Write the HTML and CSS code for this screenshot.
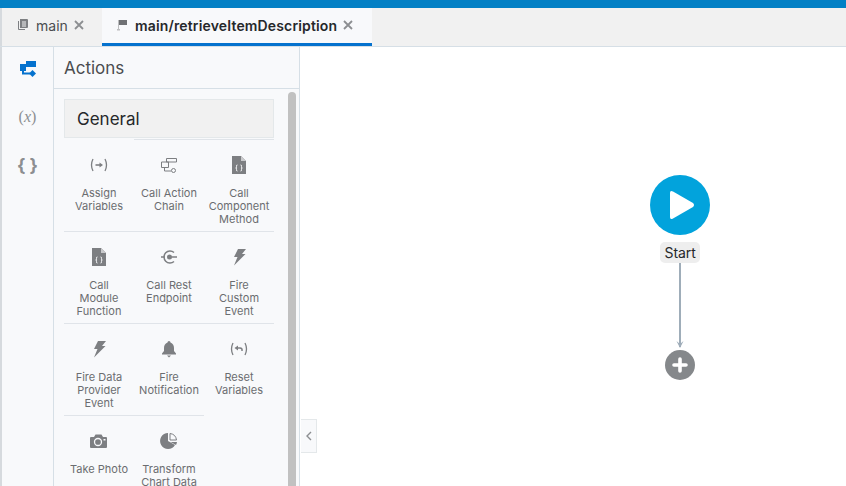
FILE: index.html
```html
<!DOCTYPE html>
<html lang="en">
<head>
    <meta charset="UTF-8">
    <meta name="viewport" content="width=device-width, initial-scale=1.0">
    <title>main/retrieveItemDescription</title>
    <link rel="stylesheet" href="styles.css">
</head>
<body>
    <div class="topbar"></div>
    <div class="tabs">
        <div class="tab">
            <svg class="tab-icon" width="12" height="12" viewBox="0 0 12 12"><path d="M1 2h1v8h6v1H2a1 1 0 0 1-1-1z" fill="#7d7f82"/><path d="M3 0h7a1 1 0 0 1 1 1v7a1 1 0 0 1-1 1H3z" fill="#7d7f82"/><path d="M5 3h4M5 5h4M5 7h4" stroke="#f1f1f1"/></svg>
            <span>main</span>
            <svg class="close" width="10" height="10" viewBox="0 0 10 10"><path d="M1 1l8 8M9 1l-8 8" stroke="#8c8e91" stroke-width="1.800"/></svg>
        </div>
        <div class="tab active">
            <svg class="tab-icon" width="12" height="12" viewBox="0 0 12 12"><path d="M3 1h8v5H3z" fill="#6f7174"/><path d="M2 1h1v9H2zM1 10h3v1.500H1z" fill="#bdbec0"/></svg>
            <span>main/retrieveItemDescription</span>
            <svg class="close" width="10" height="10" viewBox="0 0 10 10"><path d="M1 1l8 8M9 1l-8 8" stroke="#8c8e91" stroke-width="1.800"/></svg>
        </div>
    </div>
    <div class="main">
        <div class="rail">
            <svg class="rail-icon" width="16" height="16" viewBox="0 0 16 16"><path d="M6 0h10v6H6zM0 3h6v7H0z" fill="#0572ce"/><path d="M3 10v2.500h7" stroke="#0572ce" stroke-width="2" fill="none"/><path d="M12.500 9l3.500 3.500-3.500 3.500-3.500-3.500z" fill="#0572ce"/></svg>
            <span class="rail-text var">(<i>x</i>)</span>
            <span class="rail-text braces">{ }</span>
        </div>
        <div class="panel">
            <div class="panel-title">Actions</div>
            <div class="panel-body">
                <div class="group">General</div>
                <div class="tiles">
                    <div class="tile">
                        <svg width="18" height="18" viewBox="0 0 18 18"><path d="M3 3Q0 9 3 15M15 3q3 6 0 12" stroke="#7d7f82" fill="none" stroke-width="1.300"/><path d="M5.500 9h5" stroke="#7d7f82" stroke-width="1.600"/><path d="M9.500 6.500L13 9l-3.500 2.500z" fill="#7d7f82"/></svg>
                        <span>Assign<br>Variables</span>
                    </div>
                    <div class="tile">
                        <svg width="18" height="18" viewBox="0 0 18 18"><g stroke="#7d7f82" fill="none"><path d="M6.500 2.500h10V6h-10zM1.500 6h7v5.500h-7zM4.500 11.500V15H11"/><circle cx="13.500" cy="14.500" r="2"/></g></svg>
                        <span>Call Action<br>Chain</span>
                    </div>
                    <div class="tile">
                        <svg width="18" height="18" viewBox="0 0 18 18"><path d="M2 0h9l5 5v13H2z" fill="#7d7f82"/><path d="M11 0v5h5z" fill="#c9cacc"/><path d="M7.500 9q-1.500 0-1 1.500t-.8 1.500q1.300 0 .8 1.500t1 1.500M10.500 9q1.500 0 1 1.500t.8 1.500q-1.300 0-.8 1.500t-1 1.500" stroke="#f8f9fb" fill="none"/></svg>
                        <span>Call<br>Component<br>Method</span>
                    </div>
                    <div class="tile">
                        <svg width="18" height="18" viewBox="0 0 18 18"><path d="M2 0h9l5 5v13H2z" fill="#7d7f82"/><path d="M11 0v5h5z" fill="#c9cacc"/><path d="M7.500 9q-1.500 0-1 1.500t-.8 1.500q1.300 0 .8 1.500t1 1.500M10.500 9q1.500 0 1 1.500t.8 1.500q-1.300 0-.8 1.500t-1 1.500" stroke="#f8f9fb" fill="none"/></svg>
                        <span>Call<br>Module<br>Function</span>
                    </div>
                    <div class="tile">
                        <svg width="18" height="18" viewBox="0 0 18 18"><path d="M1 9h4M12 9h5" stroke="#7d7f82" stroke-width="1.400"/><path d="M14 4.500A6 6 0 1 0 14 13.500" stroke="#7d7f82" stroke-width="1.500" fill="none"/><circle cx="9.500" cy="9" r="2.500" fill="#7d7f82"/></svg>
                        <span>Call Rest<br>Endpoint</span>
                    </div>
                    <div class="tile">
                        <svg width="18" height="18" viewBox="0 0 18 18"><path d="M8 1h8l-4 5h3.500L4 17.500 7.500 9H4z" fill="#7d7f82"/></svg>
                        <span>Fire<br>Custom<br>Event</span>
                    </div>
                    <div class="tile">
                        <svg width="18" height="18" viewBox="0 0 18 18"><path d="M8 1h8l-4 5h3.500L4 17.500 7.500 9H4z" fill="#7d7f82"/></svg>
                        <span>Fire Data<br>Provider<br>Event</span>
                    </div>
                    <div class="tile">
                        <svg width="18" height="18" viewBox="0 0 18 18"><path d="M9 1a1.500 1.500 0 0 1 1.500 1.500C13 3.500 14 5.500 14 8v3l2 2.500v1H2v-1L4 11V8c0-2.500 1-4.500 3.500-5.500A1.500 1.500 0 0 1 9 1z" fill="#7d7f82"/><path d="M7 15.500h4L9 17.500z" fill="#7d7f82"/></svg>
                        <span>Fire<br>Notification</span>
                    </div>
                    <div class="tile">
                        <svg width="18" height="18" viewBox="0 0 18 18"><path d="M3 3Q0 9 3 15M15 3q3 6 0 12" stroke="#7d7f82" fill="none" stroke-width="1.300"/><path d="M7 8h3q2.500 0 2 3" stroke="#7d7f82" fill="none" stroke-width="1.500"/><path d="M8 5.500v5L4.500 8z" fill="#7d7f82"/></svg>
                        <span>Reset<br>Variables</span>
                    </div>
                    <div class="tile">
                        <svg width="18" height="18" viewBox="0 0 18 18"><path d="M1 5h3l1.500-2.500h6L13 5h3a1 1 0 0 1 1 1v9a1 1 0 0 1-1 1H1a1 1 0 0 1-1-1V6a1 1 0 0 1 1-1z" fill="#7d7f82"/><circle cx="8" cy="10" r="3.500" fill="none" stroke="#f8f9fb" stroke-width="1.300"/><path d="M13.500 7h2v1.500h-2z" fill="#f8f9fb"/></svg>
                        <span>Take Photo</span>
                    </div>
                    <div class="tile">
                        <svg width="18" height="18" viewBox="0 0 18 18"><path d="M8 1a8 8 0 1 0 7 12L8 9z" fill="#7d7f82"/><path d="M10 1.500a7.500 7.500 0 0 1 6.500 6.500H10z" fill="#f8f9fb" stroke="#7d7f82"/><path d="M10.500 10H17a8 8 0 0 1-1 3z" fill="#7d7f82"/></svg>
                        <span>Transform<br>Chart Data</span>
                    </div>
                </div>
                <div class="scrollbar"></div>
            </div>
        </div>
        <div class="canvas">
            <div class="collapse">
                <svg width="6" height="10" viewBox="0 0 6 10"><path d="M5 1L1 5l4 4" stroke="#8c8e91" stroke-width="1.400" fill="none"/></svg>
            </div>
            <div class="node-start">
                <svg width="26" height="30" viewBox="0 0 26 30"><path d="M1 3q0-3 3-1.500l20 11.500q2 2 0 4L4 28.500Q1 30 1 27z" fill="#fff"/></svg>
            </div>
            <div class="node-label">Start</div>
            <svg class="node-line" width="10" height="88" viewBox="0 0 10 88"><path d="M5 0v84" stroke="#9fadb9" stroke-width="2"/><path d="M1.500 78L5 85l3.500-7L5 81z" fill="#9fadb9"/></svg>
            <div class="node-add">
                <svg width="16" height="16" viewBox="0 0 16 16"><path d="M8 2v12M2 8h12" stroke="#fff" stroke-width="3.600" stroke-linecap="round"/></svg>
            </div>
        </div>
    </div>
</body>
</html>
```
FILE: styles.css
```css
body {
    font-family: Inter, "Noto Sans", sans-serif;
    margin: 0;
    padding: 0;
    height: 486px;
    overflow: hidden;
    background-color: #fff;
    display: flex;
    flex-direction: column;
}
.topbar {
    height: 8px;
    background-color: #0380c5;
}
.tabs {
    height: 38px;
    display: flex;
    background-color: #f1f1f1;
    border-left: 2px solid #d6dade;
}
.tab {
    display: flex;
    align-items: center;
    padding: 0 0 4px 15px;
    width: 85px;
    font-size: 14px;
    color: #4a4c4f;
}
.tab-icon {
    margin-right: 7px;
}
.close {
    margin-left: 6px;
}
.tab.active {
    width: 270px;
    box-sizing: border-box;
    background-color: #f8f9fb;
    border-bottom: 3px solid #0572ce;
    font-weight: 600;
    letter-spacing: 0.15px;
    color: #26282b;
    padding: 0 0 1px 14px;
}
.main {
    flex: 1;
    display: flex;
    min-height: 0;
    border-top: 1px solid #d6dfe6;
}
.rail {
    width: 54px;
    box-sizing: border-box;
    border-left: 2px solid #d6dade;
    border-right: 1px solid #d6dfe6;
    background-color: #f8f9fb;
    display: flex;
    flex-direction: column;
    align-items: center;
    padding-top: 14px;
}
.rail-icon {
    margin-bottom: 30px;
}
.rail-text {
    color: #8c8e91;
    line-height: 20px;
}
.var {
    font-family: "Liberation Serif", serif;
    font-size: 16px;
    margin-bottom: 29px;
}
.braces {
    font-weight: 700;
    font-size: 18px;
}
.panel {
    width: 246px;
    box-sizing: border-box;
    border-right: 1px solid #d6dfe6;
    background-color: #f8f9fb;
    display: flex;
    flex-direction: column;
    min-height: 0;
}
.panel-title {
    height: 41px;
    line-height: 43px;
    padding-left: 10px;
    font-size: 17px;
    color: #4a4c4f;
    border-bottom: 1px solid #d6dfe6;
}
.panel-body {
    position: relative;
    flex: 1;
    padding: 10px 25px 0 10px;
    min-height: 0;
    overflow: hidden;
}
.group {
    height: 39px;
    line-height: 39px;
    box-sizing: border-box;
    padding-left: 12px;
    font-size: 17px;
    color: #26282b;
    background-color: #f1f1f1;
    border: 1px solid #e4e8ea;
}
.tiles {
    display: grid;
    grid-template-columns: repeat(3, 70px);
    width: 210px;
    margin-top: 1px;
}
.tile {
    height: 92px;
    box-sizing: border-box;
    border-top: 1px solid #e0e4e9;
    padding-top: 16px;
    display: flex;
    flex-direction: column;
    align-items: center;
    text-align: center;
    font-size: 11px;
    line-height: 13px;
    color: #6b6d70;
}
.tile:first-child {
    border-top-color: transparent;
}
.tile svg {
    margin-bottom: 13px;
    flex: none;
}
.scrollbar {
    position: absolute;
    top: 3px;
    right: 3px;
    bottom: -10px;
    width: 8px;
    border-radius: 4px;
    background-color: #c1c1c1;
}
.canvas {
    position: relative;
    flex: 1;
    background-color: #fff;
}
.collapse {
    position: absolute;
    left: 1px;
    top: 372px;
    width: 16px;
    height: 34px;
    box-sizing: border-box;
    background-color: #f8f9fb;
    border: 1px solid #e4e8ea;
    border-left: 0;
    display: flex;
    align-items: center;
    justify-content: center;
}
.node-start {
    position: absolute;
    left: 349.5px;
    top: 127.5px;
    width: 60px;
    height: 60px;
    border-radius: 50%;
    background-color: #02a3dc;
    display: flex;
    align-items: center;
    justify-content: center;
}
.node-start svg {
    margin-left: 4px;
}
.node-label {
    position: absolute;
    left: 360px;
    top: 195px;
    padding: 0 4.5px;
    height: 21px;
    line-height: 21px;
    font-size: 14px;
    letter-spacing: -0.05px;
    color: #26282b;
    background-color: #eeeeee;
    border-radius: 5px;
}
.node-line {
    position: absolute;
    left: 375px;
    top: 216px;
}
.node-add {
    position: absolute;
    left: 365px;
    top: 303px;
    width: 30px;
    height: 30px;
    border-radius: 50%;
    background-color: #85888b;
    display: flex;
    align-items: center;
    justify-content: center;
}
```
